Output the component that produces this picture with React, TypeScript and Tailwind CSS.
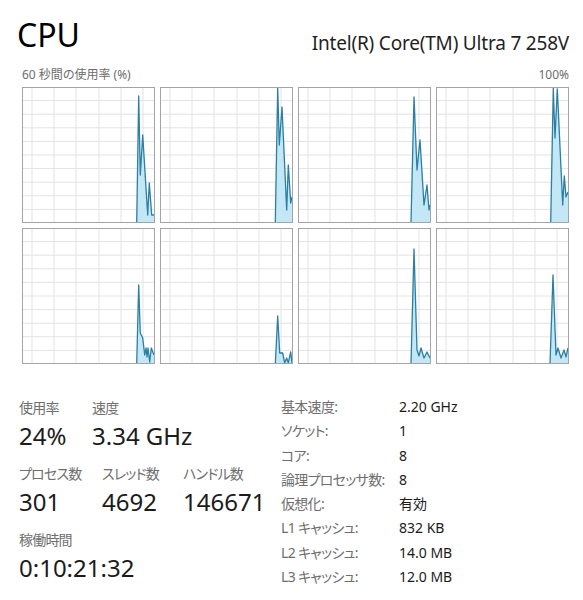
import React from 'react';

type Pt = [number, number];

const graphs: Pt[][] = [
    [[114.7, 136], [116.7, 9], [118.3, 88], [120.7, 48], [125.7, 128], [127.3, 96], [129.7, 128], [132, 128]],
    [[115.3, 136], [117.7, 1], [119.3, 58], [122, 20], [126.7, 123], [128.3, 78], [130.7, 116], [132, 110]],
    [[113, 136], [116, 10], [119, 83], [122, 53], [126, 118], [129, 98], [131, 123], [132, 118]],
    [[114.7, 136], [117.3, 1], [119, 51], [121.3, 2], [126.7, 118], [128.3, 89], [130, 110], [132, 105]],
    [[114.7, 136], [116.7, 57], [118.3, 105], [120.7, 110], [122.7, 127], [124, 120], [125, 129], [126, 120], [127.7, 134], [129.3, 120], [132, 127]],
    [[115.3, 136], [117.7, 88], [119.7, 125], [122.7, 125], [124.7, 135], [126.7, 130], [128.3, 135], [130.7, 124], [132, 135]],
    [[113, 136], [116, 21], [119, 122], [121, 128], [123, 120], [126, 130], [129, 124], [132, 130]],
    [[114, 136], [117, 47], [120, 127], [122, 120], [125, 130], [128, 122], [130, 129], [132, 120]],
];

const vLines = [10, 32, 54, 77, 99, 121];
const hLines = [1, 2, 3, 4, 5, 6, 7, 8, 9].map(i => i * 13.6);

const details: [string, string][] = [
    ['基本速度:', '2.20 GHz'],
    ['ソケット:', '1'],
    ['コア:', '8'],
    ['論理プロセッサ数:', '8'],
    ['仮想化:', '有効'],
    ['L1 キャッシュ:', '832 KB'],
    ['L2 キャッシュ:', '14.0 MB'],
    ['L3 キャッシュ:', '12.0 MB'],
];

const CoreGraph: React.FC<{ pts: Pt[] }> = ({ pts }) => {
    const line = pts.map(p => p.join(',')).join(' ');
    const last = pts[pts.length - 1];
    const fill = `${line} ${last[0]},136 ${pts[0][0]},136`;
    return (
        <div className="h-[136px] border border-[#a4a4a4] bg-white">
            <svg viewBox="1 1 131 134" preserveAspectRatio="none" className="block w-full h-full">
                {vLines.map(x => (
                    <line key={'v' + x} x1={x} y1={0} x2={x} y2={136} stroke="#e3e3e3" strokeWidth={1} vectorEffect="non-scaling-stroke" />
                ))}
                {hLines.map(y => (
                    <line key={'h' + y} x1={0} y1={y} x2={133} y2={y} stroke="#e3e3e3" strokeWidth={1} vectorEffect="non-scaling-stroke" />
                ))}
                <polygon points={fill} fill="#c4e7f5" />
                <polyline points={line} fill="none" stroke="#2a7fa3" strokeWidth={1.3} strokeLinejoin="round" vectorEffect="non-scaling-stroke" />
            </svg>
        </div>
    );
};

const Stat: React.FC<{ label: string; value: string; width: string }> = ({ label, value, width }) => (
    <div className={width}>
        <div className="text-[14px] leading-[20px] text-[#6e6e6e] whitespace-nowrap tracking-[-0.8px]">{label}</div>
        <div className="mt-[3px] text-[24px] leading-[30px] text-[#1b1b1b] whitespace-nowrap">{value}</div>
    </div>
);

export default function App() {
    return (
        <div
            className="w-[583px] h-[600px] bg-white pl-[22px] pr-[14px] pt-[19px] overflow-hidden [font-feature-settings:'palt']"
            style={{ fontFamily: '"Noto Sans", "Noto Sans CJK JP", sans-serif' }}
        >
            {/* Title row */}
            <div className="flex justify-between items-start h-[50px]">
                <div className="-ml-[5px] text-[32px] leading-none text-black">CPU</div>
                <div className="mt-[15px] text-[19px] leading-none text-[#1f1f1f] tracking-[-0.2px]">
                    Intel(R) Core(TM) Ultra 7 258V
                </div>
            </div>

            <div className="flex justify-between h-[12px] text-[12px] leading-none text-[#6d6d6d]">
                <span>60 秒間の使用率 (%)</span>
                <span>100%</span>
            </div>

            {/* Per-core graphs */}
            <div className="mt-[6px] grid grid-cols-4 gap-[5px]">
                {graphs.map((g, i) => (
                    <CoreGraph key={i} pts={g} />
                ))}
            </div>

            {/* Stats */}
            <div className="flex items-start">
                <div className="-ml-[3px] w-[262px] pt-[34px]">
                    <div className="flex">
                        <Stat label="使用率" value="24%" width="w-[73px]" />
                        <Stat label="速度" value="3.34 GHz" width="w-[120px]" />
                    </div>
                    <div className="flex mt-[13px]">
                        <Stat label="プロセス数" value="301" width="w-[83px]" />
                        <Stat label="スレッド数" value="4692" width="w-[81px]" />
                        <Stat label="ハンドル数" value="146671" width="w-[90px]" />
                    </div>
                    <div className="mt-[13px]">
                        <Stat label="稼働時間" value="0:10:21:32" width="w-[150px]" />
                    </div>
                </div>

                <div className="pt-[31px] text-[14px] leading-[24.3px]">
                    {details.map(([k, v]) => (
                        <div key={k} className="flex">
                            <span className="w-[118px] text-[#6e6e6e] whitespace-nowrap tracking-[-0.7px]">{k}</span>
                            <span className="text-[#1b1b1b]">{v}</span>
                        </div>
                    ))}
                </div>
            </div>
        </div>
    );
}
